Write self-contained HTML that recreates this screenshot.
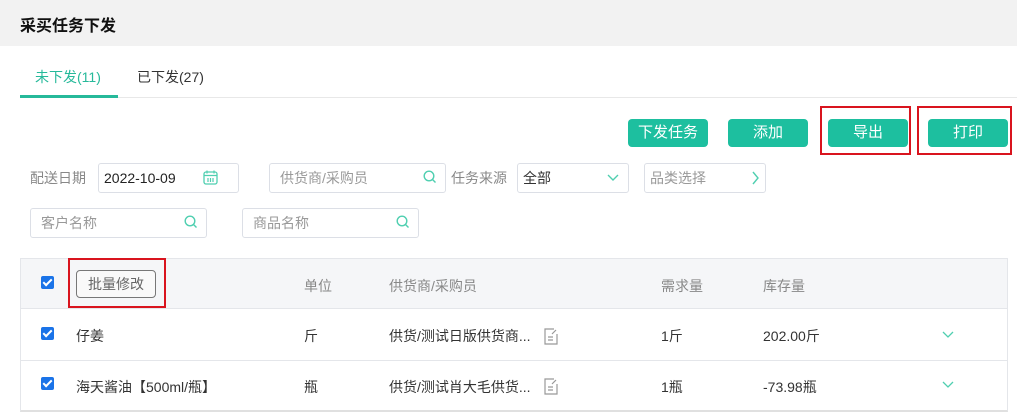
<!DOCTYPE html>
<html><head><meta charset="utf-8"><style>
*{box-sizing:border-box;margin:0;padding:0}
body{width:1017px;height:416px;background:#fff;font-family:"Liberation Sans","Noto Sans CJK SC",sans-serif;font-size:14px;color:#333;position:relative;overflow:hidden}
.a{position:absolute}
.hd{left:0;top:0;width:1017px;height:46px;background:#f2f2f2}
.btn{background:#1dbf9f;color:#fff;font-size:15px;border-radius:4px;height:28px;top:119px;width:80px;text-align:center;line-height:28px}
.red{border:2px solid #d9141e}
.inp{border:1px solid #dcdfe6;border-radius:3px;height:30px;line-height:28px;padding-left:10px;color:#999;font-size:14px}
.lbl{color:#888;font-size:14px;line-height:30px}
.ck{width:13px;height:13px;background:#1a73e8;border-radius:2px}
.ck:after{content:"";position:absolute;left:4px;top:1px;width:3px;height:7px;border:solid #fff;border-width:0 2px 2px 0;transform:rotate(45deg)}
.th{color:#888;font-size:14px}
.td{color:#333;font-size:14px}
</style></head><body>
<div class="a hd"></div>
<div class="a" style="left:20px;top:12px;font-size:16px;font-weight:bold;color:#111">采买任务下发</div>
<div class="a" style="left:35px;top:67px;color:#26b99a;font-size:14px">未下发(11)</div>
<div class="a" style="left:137px;top:67px;color:#333;font-size:14px">已下发(27)</div>
<div class="a" style="left:20px;top:97px;width:997px;height:1px;background:#e8e8e8"></div>
<div class="a" style="left:20px;top:95px;width:98px;height:3px;background:#26b99a"></div>

<div class="a btn" style="left:628px">下发任务</div>
<div class="a btn" style="left:728px">添加</div>
<div class="a btn" style="left:828px">导出</div>
<div class="a btn" style="left:928px">打印</div>
<div class="a red" style="left:820px;top:106px;width:91px;height:49px"></div>
<div class="a red" style="left:917px;top:106px;width:95px;height:49px"></div>

<div class="a lbl" style="left:30px;top:163px">配送日期</div>
<div class="a inp" style="left:98px;top:163px;width:141px;color:#222;padding-left:5px">2022-10-09</div>
<svg class="a" style="left:203px;top:170px" width="15" height="15" viewBox="0 0 15 15"><rect x="1" y="2" width="13" height="12" rx="2" fill="none" stroke="#4fcfb0" stroke-width="1.3"/><path d="M4 0.5v3M11 0.5v3M1 5.5h13M5 8v4M7.5 8v4M10 8v4" stroke="#4fcfb0" stroke-width="1.2"/></svg>
<div class="a inp" style="left:269px;top:163px;width:177px">供货商/采购员</div>
<svg class="a" style="left:423px;top:170px" width="14" height="14" viewBox="0 0 14 14"><circle cx="6" cy="6" r="4.8" fill="none" stroke="#4fcfb0" stroke-width="1.4"/><path d="M9.5 9.5l3 3" stroke="#4fcfb0" stroke-width="1.4"/></svg>
<div class="a lbl" style="left:451px;top:163px">任务来源</div>
<div class="a inp" style="left:517px;top:163px;width:112px;color:#333;padding-left:5px">全部</div>
<svg class="a" style="left:607px;top:174px" width="12" height="8" viewBox="0 0 12 8"><path d="M1 1l5 5 5-5" fill="none" stroke="#4fcfb0" stroke-width="1.4"/></svg>
<div class="a inp" style="left:644px;top:163px;width:122px;padding-left:5px">品类选择</div>
<svg class="a" style="left:752px;top:171px" width="8" height="14" viewBox="0 0 8 14"><path d="M1 1l5 6-5 6" fill="none" stroke="#4fcfb0" stroke-width="1.4"/></svg>

<div class="a inp" style="left:30px;top:208px;width:177px">客户名称</div>
<svg class="a" style="left:184px;top:215px" width="14" height="14" viewBox="0 0 14 14"><circle cx="6" cy="6" r="4.8" fill="none" stroke="#4fcfb0" stroke-width="1.4"/><path d="M9.5 9.5l3 3" stroke="#4fcfb0" stroke-width="1.4"/></svg>
<div class="a inp" style="left:242px;top:208px;width:177px">商品名称</div>
<svg class="a" style="left:396px;top:215px" width="14" height="14" viewBox="0 0 14 14"><circle cx="6" cy="6" r="4.8" fill="none" stroke="#4fcfb0" stroke-width="1.4"/><path d="M9.5 9.5l3 3" stroke="#4fcfb0" stroke-width="1.4"/></svg>

<div class="a" style="left:20px;top:258px;width:988px;height:154px;border:1px solid #e4e6ea;border-bottom:2px solid #e0e0e0"></div>
<div class="a" style="left:21px;top:259px;width:986px;height:50px;background:#f5f6f8;border-bottom:1px solid #e4e6ea"></div>
<div class="a" style="left:21px;top:360px;width:986px;height:1px;background:#e4e6ea"></div>

<div class="a ck" style="left:41px;top:276px"></div>
<div class="a" style="left:76px;top:270px;width:80px;height:28px;border:1px solid #777;border-radius:4px;text-align:center;line-height:26px;color:#666;font-size:14px;background:#f9f9f9">批量修改</div>
<div class="a red" style="left:68px;top:258px;width:98px;height:50px"></div>
<div class="a th" style="left:304px;top:276px">单位</div>
<div class="a th" style="left:389px;top:276px">供货商/采购员</div>
<div class="a th" style="left:661px;top:276px">需求量</div>
<div class="a th" style="left:763px;top:276px">库存量</div>

<div class="a ck" style="left:41px;top:327px"></div>
<div class="a td" style="left:76px;top:326px">仔姜</div>
<div class="a td" style="left:304px;top:326px">斤</div>
<div class="a td" style="left:389px;top:326px">供货/测试日版供货商...</div>
<svg class="a" style="left:544px;top:328px" width="14" height="17" viewBox="0 0 14 17"><path d="M10 1H1v15h12V6" fill="none" stroke="#999" stroke-width="1.2"/><path d="M4 9h5M4 12h5M8 6l4-4" stroke="#999" stroke-width="1.2"/></svg>
<div class="a td" style="left:661px;top:326px">1斤</div>
<div class="a td" style="left:763px;top:326px">202.00斤</div>
<svg class="a" style="left:942px;top:331px" width="12" height="8" viewBox="0 0 12 8"><path d="M1 1l5 5 5-5" fill="none" stroke="#4fcfb0" stroke-width="1.3"/></svg>

<div class="a ck" style="left:41px;top:377px"></div>
<div class="a td" style="left:76px;top:377px">海天酱油【500ml/瓶】</div>
<div class="a td" style="left:304px;top:377px">瓶</div>
<div class="a td" style="left:389px;top:377px">供货/测试肖大毛供货...</div>
<svg class="a" style="left:544px;top:378px" width="14" height="17" viewBox="0 0 14 17"><path d="M10 1H1v15h12V6" fill="none" stroke="#999" stroke-width="1.2"/><path d="M4 9h5M4 12h5M8 6l4-4" stroke="#999" stroke-width="1.2"/></svg>
<div class="a td" style="left:661px;top:377px">1瓶</div>
<div class="a td" style="left:763px;top:377px">-73.98瓶</div>
<svg class="a" style="left:942px;top:381px" width="12" height="8" viewBox="0 0 12 8"><path d="M1 1l5 5 5-5" fill="none" stroke="#4fcfb0" stroke-width="1.3"/></svg>
</body></html>
